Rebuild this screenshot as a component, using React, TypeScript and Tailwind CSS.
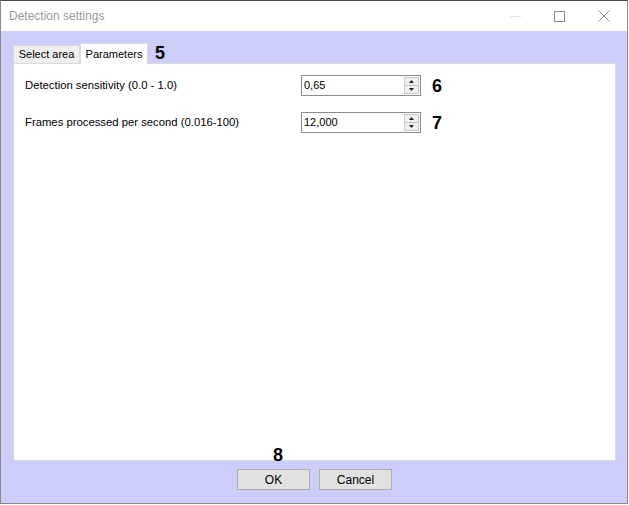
export default function App() {
  const rows = [
    { label: 'Detection sensitivity (0.0 - 1.0)', value: '0,65', mark: '6' },
    { label: 'Frames processed per second (0.016-100)', value: '12,000', mark: '7' },
  ];

  return (
    <div className="w-[629px] h-[505px] bg-white font-['Liberation_Sans',Arial,sans-serif]">
      <div className="w-[628px] h-[504px] flex flex-col border border-[#8a8a8a] border-t-[#4a4a4a]">
        {/* title bar */}
        <div className="h-[30px] shrink-0 bg-white flex items-center pl-[8px] pr-[16px]">
          <span className="text-[12px] text-[#9a9a9a]">Detection settings</span>
          <div className="ml-auto flex items-center gap-[33px]">
            <div className="w-[11px] h-px bg-[#e4e4e4]" />
            <div className="w-[11px] h-[11px] border border-[#8a8a8a]" />
            <svg width="12" height="12" viewBox="0 0 12 12" className="mr-[1px]">
              <path d="M0.5 0.5 L11.5 11.5 M11.5 0.5 L0.5 11.5" stroke="#8a8a8a" strokeWidth="1" />
            </svg>
          </div>
        </div>

        {/* body */}
        <div className="flex-1 bg-[#cdcdfb] flex flex-col pt-[12px] pl-[12px] pr-[12px]">
          <div className="flex items-end h-[20px]">
            <div className="h-[18px] w-[67px] border border-b-0 border-[#d9d9d9] bg-[#f0f0f0] text-[11px] text-black flex items-center justify-center">
              Select area
            </div>
            <div className="h-[21px] w-[68px] -mb-px relative border border-b-0 border-[#d9d9d9] bg-white text-[11px] text-black flex items-start justify-center pt-[2px]">
              Parameters
            </div>
            <span className="ml-[7px] mb-[1px] text-[18px] leading-none font-bold text-black">5</span>
          </div>

          <div className="w-[603px] h-[398px] bg-white border border-[#d9d9d9] flex flex-col gap-[16px] pt-[11px] pl-[11px]">
            {rows.map((r) => (
              <div key={r.label} className="flex items-center h-[21px]">
                <span className="w-[276px] text-[11.3px] text-black">{r.label}</span>
                <div className="w-[120px] h-[21px] border border-[#8c8c8c] flex items-center bg-white">
                  <span className="flex-1 pl-[2px] text-[11px] text-black">{r.value}</span>
                  <div className="w-[15px] h-[17px] mr-px flex flex-col border border-[#c8c8c8] bg-[#f0f0f0]">
                    <div className="flex-1 flex items-center justify-center border-b border-[#c8c8c8]">
                      <svg width="5" height="3" viewBox="0 0 5 3"><path d="M2.5 0 L5 3 L0 3 Z" fill="#222" /></svg>
                    </div>
                    <div className="flex-1 flex items-center justify-center">
                      <svg width="5" height="3" viewBox="0 0 5 3"><path d="M0 0 L5 0 L2.5 3 Z" fill="#222" /></svg>
                    </div>
                  </div>
                </div>
                <span className="ml-[11px] text-[18px] leading-none font-bold text-black">{r.mark}</span>
              </div>
            ))}
          </div>

          <div className="relative flex gap-[9px] mt-[8px] pl-[224px]">
            <span className="absolute left-[260px] -top-[23px] text-[18px] leading-none font-bold text-black">8</span>
            <button className="w-[73px] h-[21px] bg-[#e1e1e1] border border-[#adadad] text-[12px] text-black">OK</button>
            <button className="w-[73px] h-[21px] bg-[#e1e1e1] border border-[#adadad] text-[12px] text-black">Cancel</button>
          </div>
        </div>
      </div>
    </div>
  );
}
